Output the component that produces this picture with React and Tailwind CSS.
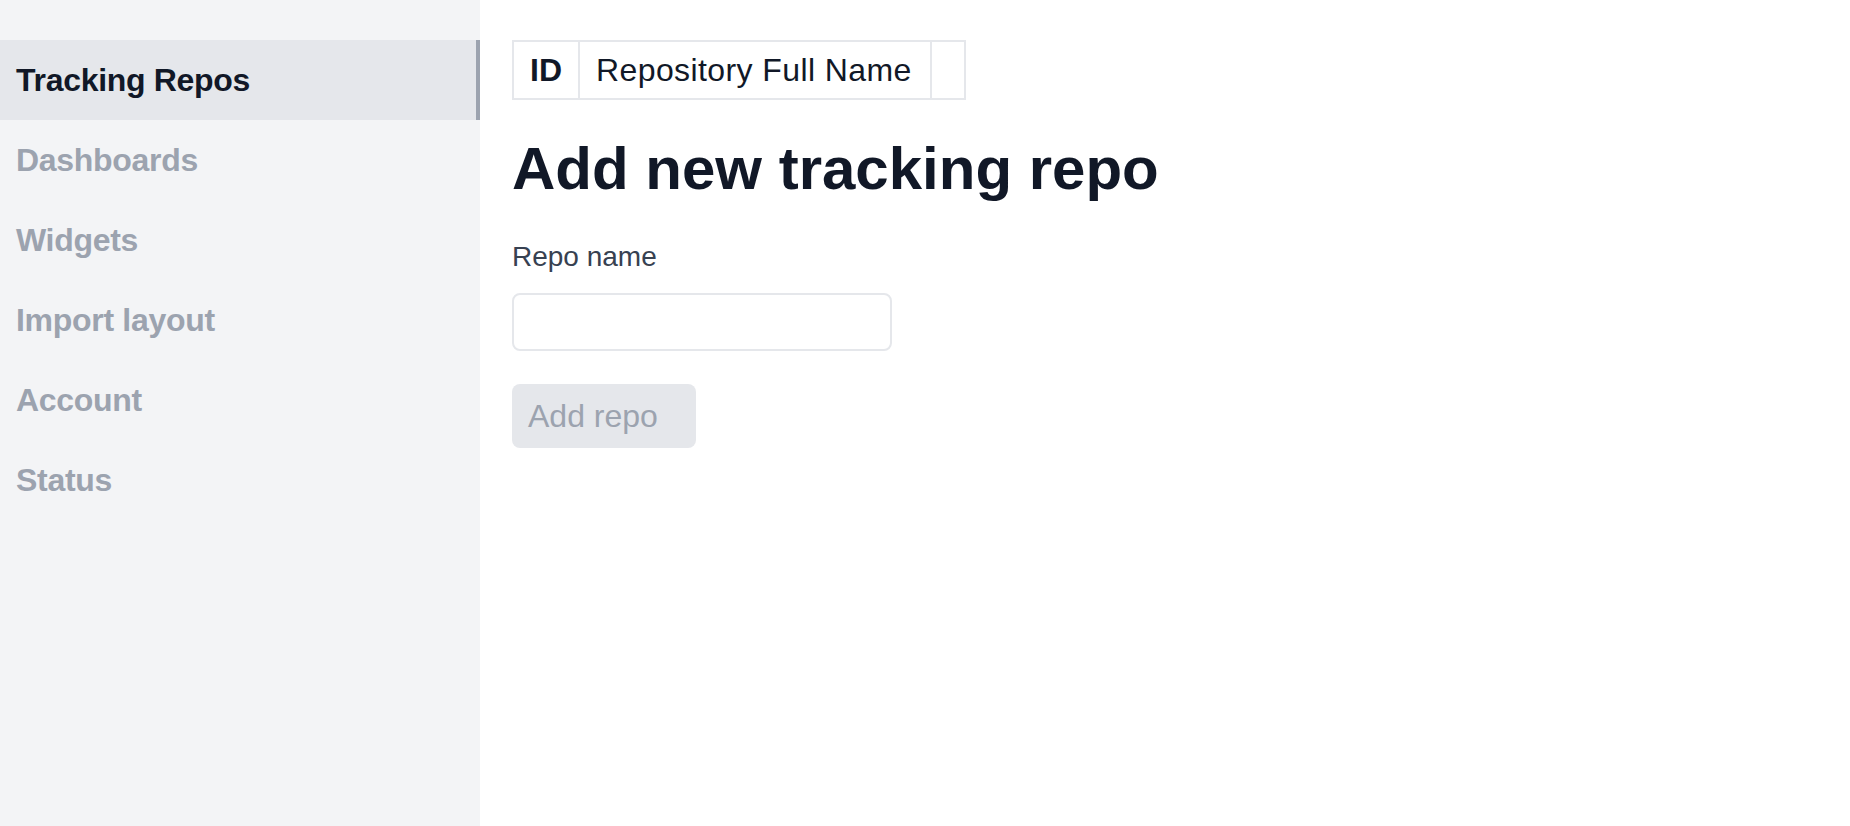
import React from "react";

const navItems = [
  { label: "Tracking Repos", active: true },
  { label: "Dashboards" },
  { label: "Widgets" },
  { label: "Import layout" },
  { label: "Account" },
  { label: "Status" },
];

function Sidebar() {
  return (
    <div className="w-[480px] shrink-0 min-h-screen bg-[#f3f4f6] pt-[40px]">
      {navItems.map((item) => (
        <div
          key={item.label}
          className={`${
            item.active
              ? "bg-[#e5e7eb] text-[#111827] border-r-4 border-[#9ca3af]"
              : "text-[#9ca3af]"
          } h-[80px] flex items-center px-[16px] text-[32px] leading-[48px] font-bold tracking-[-0.3px] cursor-pointer`}
        >
          {item.label}
        </div>
      ))}
    </div>
  );
}

function RepoForm() {
  return (
    <div className="flex-1 pl-[32px] pt-[40px] bg-white">
      <table className="border-collapse text-[32px] leading-[48px] text-[#111827]">
        <thead>
          <tr>
            <th className="border-2 border-[#e5e7eb] px-[16px] py-[4px] font-bold text-left">ID</th>
            <th className="border-2 border-[#e5e7eb] px-[16px] py-[4px] font-normal text-left tracking-[0.4px] w-[352px]">
              Repository Full Name
            </th>
            <th className="border-2 border-[#e5e7eb] px-[16px] py-[4px]"></th>
          </tr>
        </thead>
      </table>
      <h1 className="mt-[33px] text-[60px] leading-[72px] font-bold text-[#111827]">
        Add new tracking repo
      </h1>
      <label className="block mt-[32px] text-[28px] leading-[40px] text-[#374151]">Repo name</label>
      <input
        type="text"
        className="block mt-[16px] w-[380px] h-[58px] border-2 border-[#e5e7eb] rounded-lg px-[12px] text-[28px] outline-none"
      />
      <button
        disabled
        className="block mt-[33px] w-[184px] h-[64px] bg-[#e5e7eb] text-[#9ca3af] rounded-lg text-[32px] leading-[48px] text-left pl-[16px]"
      >
        Add repo
      </button>
    </div>
  );
}

export default function App() {
  return (
    <div className="flex min-h-screen font-['Liberation_Sans',Arial,sans-serif]">
      <Sidebar />
      <RepoForm />
    </div>
  );
}
